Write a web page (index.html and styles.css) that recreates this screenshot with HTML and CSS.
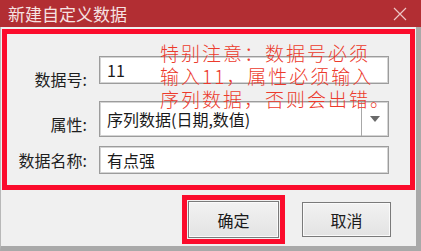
FILE: index.html
```html
<!DOCTYPE html>
<html lang="zh-CN">
<head>
<meta charset="utf-8">
<title>新建自定义数据</title>
<link rel="stylesheet" href="styles.css">
</head>
<body>
<div class="win">
  <div class="titlebar">
    <span class="title">新建自定义数据</span>
    <svg class="close" width="14" height="14" viewBox="0 0 14 14"><path d="M1 1L13 13M13 1L1 13" stroke="#ecc6c6" stroke-width="1.2" fill="none"/></svg>
  </div>
  <div class="body">
    <div class="redbox">
      <div class="form">
        <label class="lbl">数据号:</label>
        <div class="field input r1">11</div>
        <label class="lbl">属性:</label>
        <div class="field select r2">
          <span class="sel-text">序列数据(日期,数值)</span>
          <span class="sel-btn"><svg width="10" height="6" viewBox="0 0 10 6"><path d="M0 0H10L5 6Z" fill="#6a6a6a"/></svg></span>
        </div>
        <label class="lbl">数据名称:</label>
        <div class="field input r3">有点强</div>
      </div>
      <div class="note">特别注意：数据号必须<br>输入11，属性必须输入<br>序列数据，否则会出错。</div>
    </div>
    <div class="btns">
      <div class="hl"><div class="btn ok">确定</div></div>
      <div class="btn cancel">取消</div>
    </div>
  </div>
</div>
</body>
</html>
```

FILE: styles.css
```css
html, body {
  margin: 0;
  padding: 0;
  background: #f0f0f0;
}
.win {
  width: 421px;
  height: 251px;
  box-sizing: border-box;
  display: flex;
  flex-direction: column;
  background: #f0f0f0;
  font-family: "Noto Sans CJK SC", "Microsoft YaHei", sans-serif;
  overflow: hidden;
}
.titlebar {
  height: 27px;
  flex: none;
  background: #b22e33;
  display: flex;
  align-items: center;
  justify-content: space-between;
  padding: 0 14px 0 8px;
}
.title {
  color: #f6e2e2;
  font-size: 17px;
  line-height: 27px;
}
.close {
  display: block;
}
.body {
  flex: 1;
  border-left: 1px solid #b8b8b8;
  border-right: 5px solid #a9a9a9;
  border-bottom: 5px solid #a9a9a9;
  padding: 2px 1px 0 1px;
  display: flex;
  flex-direction: column;
}
.redbox {
  position: relative;
  border: 5px solid #fb0c2c;
  height: 161px;
  box-sizing: border-box;
  padding: 22px 0 11px 0;
}
.form {
  display: grid;
  grid-template-columns: 80px 290px;
  column-gap: 12px;
  align-items: center;
}
.lbl {
  text-align: right;
  font-size: 16px;
  color: #1e1e1e;
  line-height: 20px;
}
.field {
  box-sizing: border-box;
  background: #fff;
  border: 1px solid #9c9c9c;
  box-shadow: inset 0 0 0 1px #d4d4d4;
  font-size: 16px;
  color: #1a1a1a;
  display: flex;
  align-items: center;
}
.input {
  height: 28px;
  padding-left: 7px;
}
.r1 { margin-bottom: 17px; }
.r2 { margin-bottom: 9px; }
.select {
  height: 36px;
  padding-left: 7px;
  justify-content: space-between;
}
.sel-text {
  flex: 1;
}
.sel-btn {
  width: 26px;
  height: 100%;
  border-left: 1px solid #a8a8a8;
  display: flex;
  align-items: center;
  justify-content: center;
}
.sel-btn svg { display: block; }
.note {
  position: absolute;
  left: 153px;
  top: 7px;
  color: #ec3a2c;
  font-size: 19px;
  letter-spacing: 2px;
  line-height: 23px;
  font-weight: 300;
  white-space: nowrap;
}
.btns {
  display: flex;
  justify-content: flex-end;
  align-items: center;
  padding: 5px 24px 0 0;
  gap: 17px;
}
.hl {
  border: 5px solid #fb0c2c;
  padding: 1px;
}
.btn {
  box-sizing: border-box;
  border: 1px solid #7a7a7a;
  box-shadow: inset 0 0 0 1px #fafafa;
  background: linear-gradient(#f2f2f2, #e3e3e3);
  font-size: 16px;
  color: #1a1a1a;
  display: flex;
  align-items: center;
  justify-content: center;
}
.ok {
  width: 91px;
  height: 37px;
}
.cancel {
  width: 89px;
  height: 35px;
}
```
